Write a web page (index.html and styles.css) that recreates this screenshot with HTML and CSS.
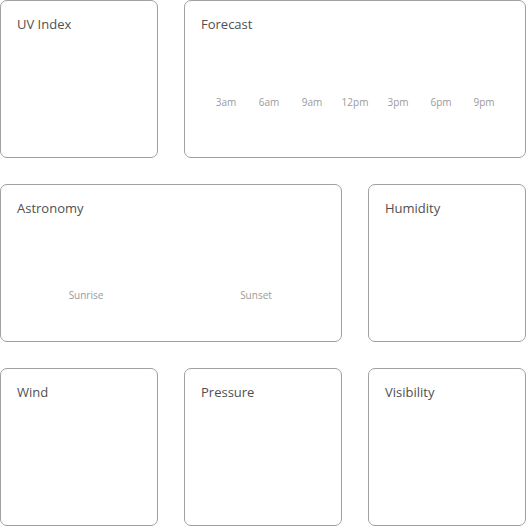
FILE: index.html
```html
<!DOCTYPE html>
<html>
<head>
<meta charset="utf-8">
<link rel="stylesheet" href="styles.css">
</head>
<body>
<div class="grid">
  <section class="card">
    <h2 class="title">UV Index</h2>
  </section>
  <section class="card span2">
    <h2 class="title">Forecast</h2>
    <div class="hours">
      <span>3am</span><span>6am</span><span>9am</span><span>12pm</span><span>3pm</span><span>6pm</span><span>9pm</span>
    </div>
  </section>
  <section class="card span2">
    <h2 class="title">Astronomy</h2>
    <div class="sun">
      <span>Sunrise</span><span>Sunset</span>
    </div>
  </section>
  <section class="card">
    <h2 class="title">Humidity</h2>
  </section>
  <section class="card">
    <h2 class="title">Wind</h2>
  </section>
  <section class="card">
    <h2 class="title">Pressure</h2>
  </section>
  <section class="card">
    <h2 class="title">Visibility</h2>
  </section>
</div>
</body>
</html>
```
FILE: styles.css
```css
html, body {
  margin: 0;
  padding: 0;
  background: #fff;
}
body {
  font-family: "Open Sans", "Noto Sans", sans-serif;
}
.grid {
  display: grid;
  grid-template-columns: repeat(3, 158px);
  grid-auto-rows: 158px;
  gap: 26px;
}
.card {
  box-sizing: border-box;
  border: 1px solid #a0a0a0;
  border-radius: 7px;
  padding: 14px 16px;
  display: flex;
  flex-direction: column;
}
.span2 {
  grid-column: span 2;
}
.title {
  margin: 0;
  font-size: 13px;
  font-weight: 400;
  color: #505050;
  line-height: 18px;
}
.hours {
  display: flex;
  justify-content: center;
  margin-top: 62px;
  font-size: 10px;
  color: #9a9a9a;
  line-height: 14px;
}
.hours span {
  width: 43px;
  text-align: center;
}
.sun {
  display: flex;
  margin: 71px -16px 0;
  font-size: 10px;
  color: #9a9a9a;
  line-height: 14px;
}
.sun span {
  flex: 1;
  text-align: center;
}
```
